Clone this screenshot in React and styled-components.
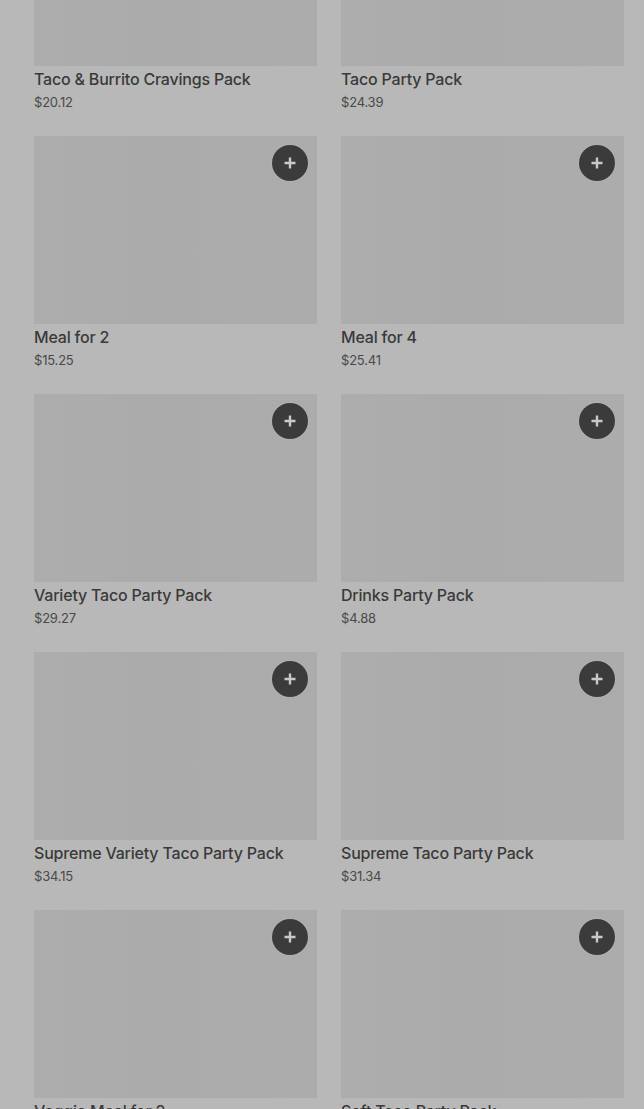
import React from "react";
import styled, { createGlobalStyle } from "styled-components";

const Global = createGlobalStyle`
  html, body { margin: 0; padding: 0; background: #b8b8b8; overflow: hidden; }
  body { font-family: "Inter", "Liberation Sans", sans-serif; }
`;

const Page = styled.div`
  padding: 0 20px 0 34px;
  margin-top: -122px;
`;

const Grid = styled.div`
  display: grid;
  grid-template-columns: 283px 283px;
  column-gap: 24px;
  row-gap: 26px;
`;

const Card = styled.div`
  display: flex;
  flex-direction: column;
`;

const ImageBox = styled.div`
  position: relative;
  height: 188px;
  background: linear-gradient(90deg, #adadad 0%, #ababab 40%, #acacac 100%);
`;

const AddButton = styled.button`
  position: absolute;
  top: 9px;
  right: 9px;
  width: 36px;
  height: 36px;
  border-radius: 50%;
  border: none;
  padding: 0;
  background: #3b3b3b;
  display: flex;
  align-items: center;
  justify-content: center;
  box-shadow: 0 0 2px rgba(200, 200, 200, 0.6);
`;

const Title = styled.div`
  margin-top: 3px;
  font-size: 16px;
  line-height: 20px;
  font-weight: 500;
  letter-spacing: -0.2px;
  color: #3a3a3a;
  white-space: nowrap;
`;

const Price = styled.div`
  margin-top: 5px;
  font-size: 13px;
  line-height: 16px;
  color: #4a4a4a;
  letter-spacing: -0.2px;
`;

const Plus = () => (
  <svg width="14" height="14" viewBox="0 0 14 14">
    <path d="M7 1.5v11M1.5 7h11" stroke="#c9c9c9" strokeWidth="2.4" />
  </svg>
);

const items = [
  ["Taco & Burrito Cravings Pack", "$20.12"],
  ["Taco Party Pack", "$24.39"],
  ["Meal for 2", "$15.25"],
  ["Meal for 4", "$25.41"],
  ["Variety Taco Party Pack", "$29.27"],
  ["Drinks Party Pack", "$4.88"],
  ["Supreme Variety Taco Party Pack", "$34.15"],
  ["Supreme Taco Party Pack", "$31.34"],
  ["Veggie Meal for 2", "$14.20"],
  ["Soft Taco Party Pack", "$24.39"],
];

export default function App() {
  return (
    <>
      <Global />
      <Page>
        <Grid>
          {items.map(([name, price], i) => (
            <Card key={name}>
              <ImageBox>
                {i >= 2 && (
                  <AddButton aria-label="Add">
                    <Plus />
                  </AddButton>
                )}
              </ImageBox>
              <Title>{name}</Title>
              <Price>{price}</Price>
            </Card>
          ))}
        </Grid>
      </Page>
    </>
  );
}
